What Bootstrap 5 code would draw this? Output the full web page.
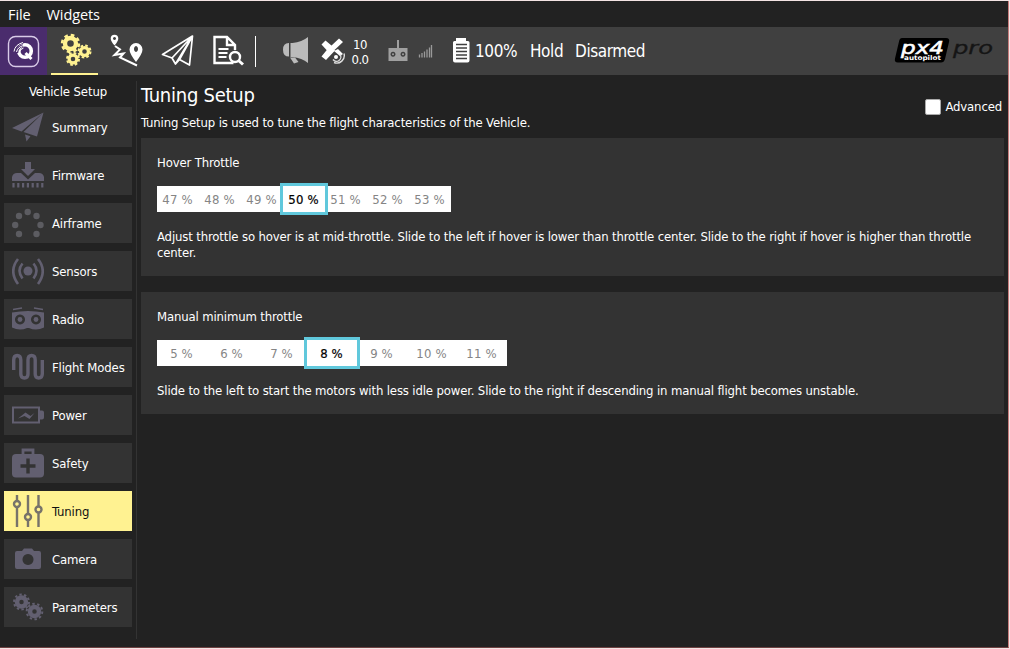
<!DOCTYPE html>
<html lang="en">
<head>
<meta charset="utf-8">
<title>Tuning Setup</title>
<link href="https://cdn.jsdelivr.net/npm/bootstrap@5.3.0/dist/css/bootstrap.min.css" rel="stylesheet">
<style>
body{background:#222;color:#fff;font:13px/16px "DejaVu Sans Condensed","DejaVu Sans",sans-serif;font-stretch:condensed;letter-spacing:-.145px}
.app{height:649px;width:1010px;border:solid #f3e4e4;border-width:1px 1px 1px 0;overflow:hidden}
.frame{border-right:1px solid #c77c7c;border-bottom:1px solid #6e4141}
.menu-bar{height:26px;padding:1px 8px 0;gap:16px;font:14.5px/25px "Open Sans",sans-serif;letter-spacing:-.1px}
.toolbar{height:48px;background:#404040;font-size:17px;line-height:48px;letter-spacing:-.4px}
.toolbar svg,.side-item svg{display:block;flex:none}
.logo-tab{width:47px;background:#4a2c6d}
.tab-on{width:47px;border-bottom:2px solid #fff291;margin-left:4px}
.divider{width:1px;height:31px;background:#fff;margin-left:5px}
.ic-horn{margin-left:25px}
.ic-sat{margin-left:7px}
.gps{width:22px;margin-left:1px;font-size:13px;line-height:15.5px;letter-spacing:-.5px;padding-top:2px}
.ic-rc{margin-left:16px}
.ic-rssi{margin-left:9px}
.ic-batt{margin-left:18px}
.t-batt{margin-left:4px;width:43px}
.t-mode{margin-left:12px;width:34px}
.t-arm{margin-left:11px}
.brand{margin-right:14px}
.sidebar{width:136px;padding:6px 4px 0}
.side-title{height:26px;line-height:21px;letter-spacing:-.1px}
.side-item{width:128px;height:40px;background:#333;margin-bottom:8px;padding-left:8px;gap:8px;color:#fff;fill:#625f70;stroke:#625f70}
.side-item span{padding-top:1px}
.side-item.on{background:#fff291;color:#111;stroke:#77736a;fill:none}
.rule{width:1px;margin:6px 4px 8px 0;background:#333}
.page-main{padding-top:6px;width:863px}
.page-head{height:57px}
.page-title{font-size:20px;line-height:29px;letter-spacing:-.25px;margin:0;font-weight:400}
.page-sub{padding-top:5px}
.check{width:16px;height:16px;border:1px solid #aaa;border-radius:2px;background:#fff}
.adv{margin:10px 2px 0 0;height:32px}
.panel{background:#333;padding:17px 16px 15px;margin-bottom:16px;height:138px}
.panel.short{height:122px}
.slider{height:26px;width:294px;background:#fff;color:#858585;margin:15px 0 17px}
.slider>span{width:42px;text-align:center;line-height:27px;letter-spacing:.15px;padding-right:1px}
.slider.wide{width:350px}
.slider.wide>span{width:50px}
.slider>.sel{width:48px;height:32px;margin:-3px;border:3px solid #60c8dc;background:#fff;color:#000;z-index:1;-webkit-text-stroke:.2px #000}
.slider.wide>.sel{width:56px}
</style>
</head>
<body>
<div class="app"><div class="frame h-100 d-flex flex-column">
<nav class="menu-bar d-flex"><span>File</span><span>Widgets</span></nav>
<header class="toolbar d-flex align-items-center text-nowrap">
  <div class="logo-tab h-100 d-flex align-items-center justify-content-center">
    <svg width="33" height="33" viewBox="0 0 33 33" fill="none" stroke="#fff"><rect x="1.500" y="1.500" width="30" height="30" rx="7" stroke="#d9cbe8" stroke-width="1.400"/><circle cx="18" cy="16" r="6.300" stroke-width="3.600"/><path d="M18.500 18l6 6" stroke-width="3"/><path d="M7 17q0-8 9-9.500M10 18q0-6 6-7.500" stroke="#4a2c6d" stroke-width="2.500"/><path d="M7 16.500q1-7 9-9M9.500 17q1-5 7-6.500M12 18q1-4 4.500-5" stroke-width="1"/></svg>
  </div>
  <div class="tab-on h-100 d-flex align-items-center justify-content-center">
    <svg width="34" height="34" viewBox="0 0 34 34" fill="none" stroke="#fff291">
      <circle cx="12.500" cy="10.500" r="5.500" stroke-width="4.400"/><circle cx="12.500" cy="10.500" r="8.400" stroke-width="2.600" stroke-dasharray="3.600 3"/>
      <circle cx="26.500" cy="18.500" r="3.900" stroke-width="3.200"/><circle cx="26.500" cy="18.500" r="6" stroke-width="2" stroke-dasharray="2.600 2.110"/>
      <circle cx="15" cy="26" r="3.900" stroke-width="3.200"/><circle cx="15" cy="26" r="6" stroke-width="2" stroke-dasharray="2.600 2.110"/>
    </svg>
  </div>
  <svg class="ms-2" width="44" height="34" viewBox="106 34 44 34" fill="#fff"><path fill-rule="evenodd" d="M114.500 45.500q-3.800-4.500-3.800-7a3.800 3.800 0 0 1 7.600 0q0 2.500-3.800 7ZM114.500 36.900a1.500 1.500 0 1 0 .01 0ZM136 62q-6.500-8.500-6.500-12.500a6.500 6.500 0 0 1 13 0Q142.500 53.500 136 62ZM136 46a2 3 0 1 0 .01 0Z"/><path d="M115 46l5 3.500-5.500 5.500 9-1.500-3.500 4 17 8" fill="none" stroke="#fff" stroke-width="2"/></svg>
  <svg class="ms-2" width="40" height="36" viewBox="158 33 40 36" fill="none" stroke="#fff" stroke-width="1.700" stroke-linejoin="round"><path d="M192.500 36L162.500 54.500l9.500 3.500 3.500 6 4-4.500 10 5.500ZM192.500 36L172 58M192.500 36L175.500 64M192.500 36L179.500 59.500"/></svg>
  <svg class="ms-2" width="44" height="36" viewBox="206 33 44 36" fill="none" stroke="#fff" stroke-width="2.400"><path d="M233.500 63H214.500V37H227l8 8v5M227 37v8h8"/><path d="M218.500 49h10M218.500 53h9M218.500 57h8" stroke-width="1.800"/><circle cx="235" cy="57" r="5"/><path d="M238.500 60.500l4.500 4" stroke-width="3"/></svg>
  <span class="divider"></span>
  <svg class="ic-horn" width="32" height="30" viewBox="281 36 32 30" fill="#bbb"><path d="M290.500 43h2q9.500-1 15.500-6v26q-6-5-15.500-6h-2Z"/><path d="M289 43v13.500q-6 0-6-6.800t6-6.700ZM290 57.500h5l3.500 4.500-4.500 1.500Z"/></svg>
  <svg class="ic-sat" width="28" height="28" viewBox="320 37 28 28" fill="#fff"><path d="M321.500 44.500l4-4 6.500 5.500-5 4.500ZM334 51l4-2 5 5-3 2ZM339 38.500l4 3.500-8.500 8-4-3.500ZM330 46l5 4.500-9 9.500-4.500-3.500Z"/><path d="M333 59.500a4 4 0 0 0 7-5M334 62.500a7.500 7.500 0 0 0 10-9" fill="none" stroke="#ddd" stroke-width="1.400"/><circle cx="336" cy="57" r="2"/></svg>
  <span class="gps text-center">10<br>0.0</span>
  <svg class="ic-rc" width="22" height="24" viewBox="387 38 22 24" fill="#a0a0a0"><path d="M397 39h2v10h-2Z"/><path fill-rule="evenodd" d="M388.500 47h19v13h-19ZM393 50.800a2.500 2.500 0 1 0 .01 0ZM403 50.800a2.500 2.500 0 1 0 .01 0Z"/><circle cx="393" cy="53.300" r="1"/><circle cx="403" cy="53.300" r="1"/></svg>
  <svg class="ic-rssi" width="16" height="16" viewBox="418 43 16 16" stroke="#999" stroke-width="1.300"><path d="M419.500 57.500v-3M422 57.500v-4.500M424.500 57.500v-6M427 57.500v-8M429.500 57.500v-10M431.500 57.500v-12.500"/></svg>
  <svg class="ic-batt" width="19" height="28" viewBox="452 37 19 28" fill="#fff"><path d="M456 38h10v3h2q1.500 0 1.500 1.500v18q0 2-2 2h-12.500q-2 0-2-2v-18q0-1.500 1.500-1.500h1.500Z"/><path d="M456 44.500h11M456 48h11M456 51.500h11M456 55h11M456 58.500h11" stroke="#404040" stroke-width="1.500"/></svg>
  <span class="t-batt">100%</span><span class="t-mode">Hold</span><span class="t-arm">Disarmed</span>
  <svg class="brand ms-auto" width="101" height="30" viewBox="893 36 101 30" font-family="DejaVu Sans" font-style="italic" letter-spacing="0"><path d="M902 38h44q4 0 3 4l-4 17q-1 3.500-4 3.500h-43q-4 0-3-4l4-17q.5-3.500 3-3.500Z"/><text x="901" y="54" fill="#fff" stroke="#fff" stroke-width=".5" font-size="18" textLength="43" lengthAdjust="spacingAndGlyphs">px4</text><text x="904" y="60" fill="#fff" font-size="6.500" font-weight="bold" font-style="normal" textLength="37" lengthAdjust="spacingAndGlyphs">autopilot</text><text x="953" y="53.500" fill="#151515" stroke="#151515" stroke-width=".3" font-size="18" textLength="40" lengthAdjust="spacingAndGlyphs">pro</text></svg>
</header>
<div class="d-flex flex-fill">
  <aside class="sidebar">
    <div class="side-title text-center">Vehicle Setup</div>
    <div class="side-item d-flex align-items-center"><svg width="32" height="32" viewBox="0 0 32 32" stroke="none"><path d="M31.500 1.500L0 17l9.500 3.500ZM31.500 1.500L11.500 21 25 25.500ZM13 23.500l5.500 1.800-4 5.200Z"/></svg><span>Summary</span></div>
    <div class="side-item d-flex align-items-center"><svg width="32" height="32" viewBox="0 0 32 32" stroke="none"><path d="M13 3h6v7h4l-7 7-7-7h4ZM0 22v-4q1-4 5-4h4l7 6.500 7-6.500h4q4 0 5 4v4Z"/><path d="M1.500 24v4.500M6.300 24v4.500M11.100 24v4.500M15.900 24v4.500M20.700 24v4.500M25.500 24v4.500M30.300 24v4.500" stroke="#625f70" stroke-width="2.200"/></svg><span>Firmware</span></div>
    <div class="side-item d-flex align-items-center"><svg width="32" height="32" viewBox="0 0 32 32" stroke="none" fill="#5c5c61"><circle cx="15.700" cy="5" r="3.200"/><circle cx="7" cy="9" r="3.200"/><circle cx="24.500" cy="9" r="3.200"/><circle cx="3.200" cy="18" r="3.200"/><circle cx="28.500" cy="18" r="3.200"/><circle cx="7" cy="27" r="3.200"/><circle cx="24.500" cy="27" r="3.200"/></svg><span>Airframe</span></div>
    <div class="side-item d-flex align-items-center"><svg width="32" height="32" viewBox="0 0 32 32" fill="none" stroke-width="2.600"><circle cx="16" cy="16" r="4.500" fill="#625f70" stroke="none"/><path d="M10.500 8.500q-6 7 0 15M21.500 8.500q6 7 0 15M6 4q-9.500 12 0 25M26 4q9.500 12 0 25"/></svg><span>Sensors</span></div>
    <div class="side-item d-flex align-items-center"><svg width="32" height="32" viewBox="0 0 32 32"><path stroke="none" fill-rule="evenodd" d="M0 9.500q16-3 32 0v15q-4 2-8 2-4 0-7-1.500h-2q-3 1.500-7 1.500-4 0-8-2ZM8 11.500a5 5 0 1 0 .01 0ZM24 11.500a5 5 0 1 0 .01 0Z"/><circle cx="8" cy="16.500" r="2.400" stroke="none"/><circle cx="24" cy="16.500" r="2.400" stroke="none"/><path d="M1 6.500l9-1.500M31 6.500l-9-1.500" stroke-width="1.700"/></svg><span>Radio</span></div>
    <div class="side-item d-flex align-items-center"><svg width="32" height="32" viewBox="0 0 32 32" fill="none" stroke-width="3.400"><path d="M1.700 19V9q0-4.500 3.500-4.500T8.800 9v14q0 4 3.600 4t3.600-4V9q0-4.500 3.600-4.500T23.200 9v14q0 4 3.500 4t3.600-4V9"/></svg><span>Flight Modes</span></div>
    <div class="side-item d-flex align-items-center"><svg width="32" height="32" viewBox="0 0 32 32"><path d="M1 8.500h26v15H1Z" fill="none" stroke-width="2"/><path stroke="none" d="M28 11.500h2q2 0 2 2v5q0 2-2 2h-2ZM6 19.500l7.500-6 5 3.500 4-3-5 6-5-3Z"/></svg><span>Power</span></div>
    <div class="side-item d-flex align-items-center"><svg width="32" height="32" viewBox="0 0 32 32"><path d="M11 7V3h10V7" fill="none" stroke-width="2.800"/><rect x="0" y="7" width="32" height="23.500" rx="4" stroke="none"/><path d="M16 11.500v15M8.500 19h15" stroke="#333" stroke-width="3.400"/></svg><span>Safety</span></div>
    <div class="side-item on d-flex align-items-center"><svg width="32" height="32" viewBox="0 0 32 32" stroke-width="2.400"><path d="M5 0v6M5 12v20M16 0v19M16 25v7M26.500 0v11.500M26.500 17.500v14.500"/><circle cx="5" cy="9" r="3"/><circle cx="16" cy="22" r="3"/><circle cx="26.500" cy="14.500" r="3"/></svg><span>Tuning</span></div>
    <div class="side-item d-flex align-items-center"><svg width="32" height="32" viewBox="0 0 32 32"><path stroke="none" fill-rule="evenodd" d="M5 8h5l2-2.500h8L22 8h5q2 0 2 2v14q0 2-2 2H5q-2 0-2-2V10q0-2 2-2ZM16 11a5.500 5.500 0 1 0 .01 0Z"/></svg><span>Camera</span></div>
    <div class="side-item d-flex align-items-center"><svg width="32" height="32" viewBox="0 0 32 32" fill="none"><circle cx="9.500" cy="11" r="4.500" stroke-width="4.500"/><circle cx="9.500" cy="11" r="7.500" stroke-width="2" stroke-dasharray="2.400 2.310"/><circle cx="22.500" cy="20.500" r="4.500" stroke-width="4.500"/><circle cx="22.500" cy="20.500" r="7.800" stroke-width="2" stroke-dasharray="2.450 2.450"/></svg><span>Parameters</span></div>
  </aside>
  <div class="rule"></div>
  <main class="page-main">
    <div class="page-head d-flex justify-content-between">
      <div><h1 class="page-title">Tuning Setup</h1><div class="page-sub">Tuning Setup is used to tune the flight characteristics of the Vehicle.</div></div>
      <label class="adv d-flex align-items-center gap-1"><span class="check"></span>Advanced</label>
    </div>
    <section class="panel"><div>Hover Throttle</div>
      <div class="slider d-flex"><span>47 %</span><span>48 %</span><span>49 %</span><span class="sel">50 %</span><span>51 %</span><span>52 %</span><span>53 %</span></div>
      <div>Adjust throttle so hover is at mid-throttle. Slide to the left if hover is lower than throttle center. Slide to the right if hover is higher than throttle center.</div>
    </section>
    <section class="panel short"><div>Manual minimum throttle</div>
      <div class="slider wide d-flex"><span>5 %</span><span>6 %</span><span>7 %</span><span class="sel">8 %</span><span>9 %</span><span>10 %</span><span>11 %</span></div>
      <div>Slide to the left to start the motors with less idle power. Slide to the right if descending in manual flight becomes unstable.</div>
    </section>
  </main>
</div>
</div></div>
<script src="https://cdn.jsdelivr.net/npm/bootstrap@5.3.0/dist/js/bootstrap.bundle.min.js"></script>
</body>
</html>
